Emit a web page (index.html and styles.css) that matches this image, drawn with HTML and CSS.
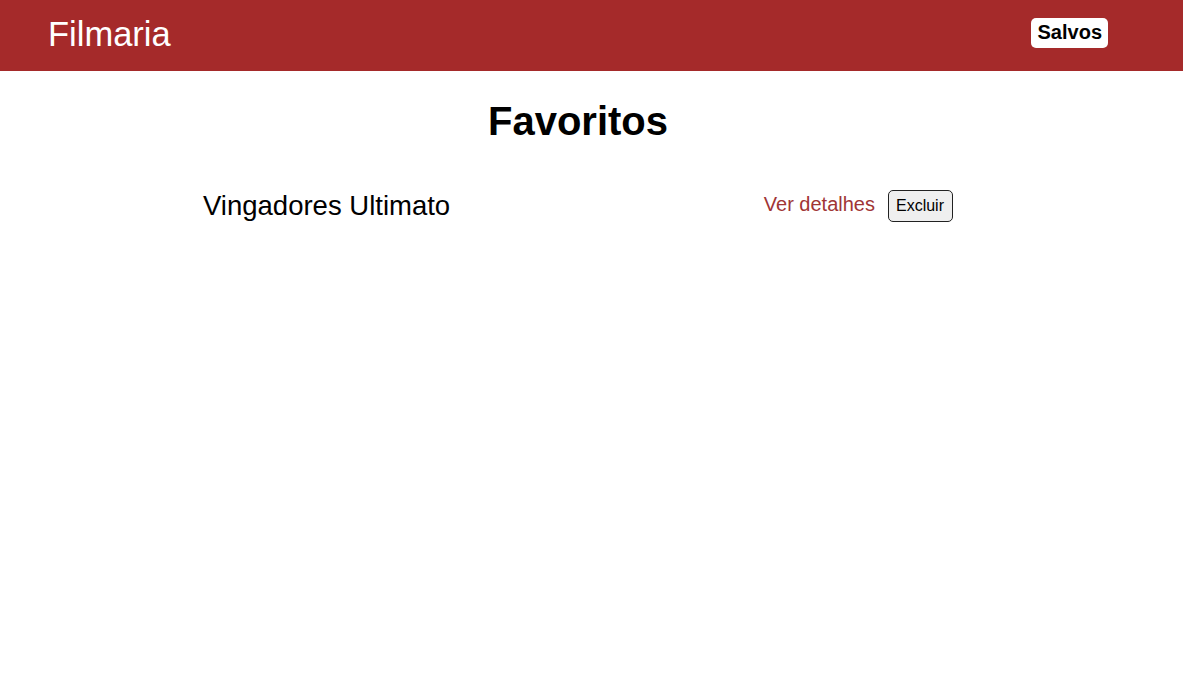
FILE: index.html
```html
<!DOCTYPE html>
<html lang="pt-BR">
<head>
<meta charset="utf-8">
<title>Filmaria - Favoritos</title>
<link rel="stylesheet" href="styles.css">
</head>
<body>
<header class="header">
  <a class="logo" href="#">Filmaria</a>
  <a class="saved" href="#">Salvos</a>
</header>
<div class="page">
  <main class="favorites">
    <h1 class="title">Favoritos</h1>
    <ul class="list">
      <li class="item">
        <span class="movie">Vingadores Ultimato</span>
        <div class="actions">
          <a class="details" href="#">Ver detalhes</a>
          <button class="delete" type="button">Excluir</button>
        </div>
      </li>
    </ul>
  </main>
</div>
</body>
</html>
```
FILE: styles.css
```css
* { box-sizing: border-box; }
body {
  margin: 0;
  font-family: "Liberation Sans", Arial, sans-serif;
  background: #fff;
  color: #000;
}
.header {
  height: 71px;
  background: #a52a2a;
  display: flex;
  align-items: center;
  justify-content: space-between;
  padding: 0 75px 0 48px;
}
.logo {
  color: #fff;
  text-decoration: none;
  font-size: 34.5px;
  line-height: 1;
  margin-top: -3px;
}
.saved {
  background: #fff;
  color: #000;
  font-weight: bold;
  font-size: 20px;
  text-decoration: none;
  padding: 3px 6px 4px 7px;
  border-radius: 5px;
  margin-top: -5px;
}
.page {
  padding-right: 27px;
}
.favorites {
  width: 750px;
  margin: 0 auto;
}
.title {
  text-align: center;
  font-size: 40px;
  line-height: 46px;
  margin: 0;
  padding-top: 27px;
}
.list {
  list-style: none;
  margin: 46px 0 0;
  padding: 0;
}
.item {
  display: flex;
  align-items: center;
  justify-content: space-between;
}
.movie {
  font-size: 27.5px;
}
.actions {
  display: flex;
  align-items: center;
  gap: 13px;
}
.details {
  color: #a03535;
  text-decoration: none;
  font-size: 20px;
  margin-top: -3px;
}
.delete {
  font-family: "Liberation Sans", Arial, sans-serif;
  font-size: 16px;
  background: #efefef;
  border: 1px solid #222;
  border-radius: 5px;
  padding: 6px 8px 6px 7px;
  color: #000;
}
```
